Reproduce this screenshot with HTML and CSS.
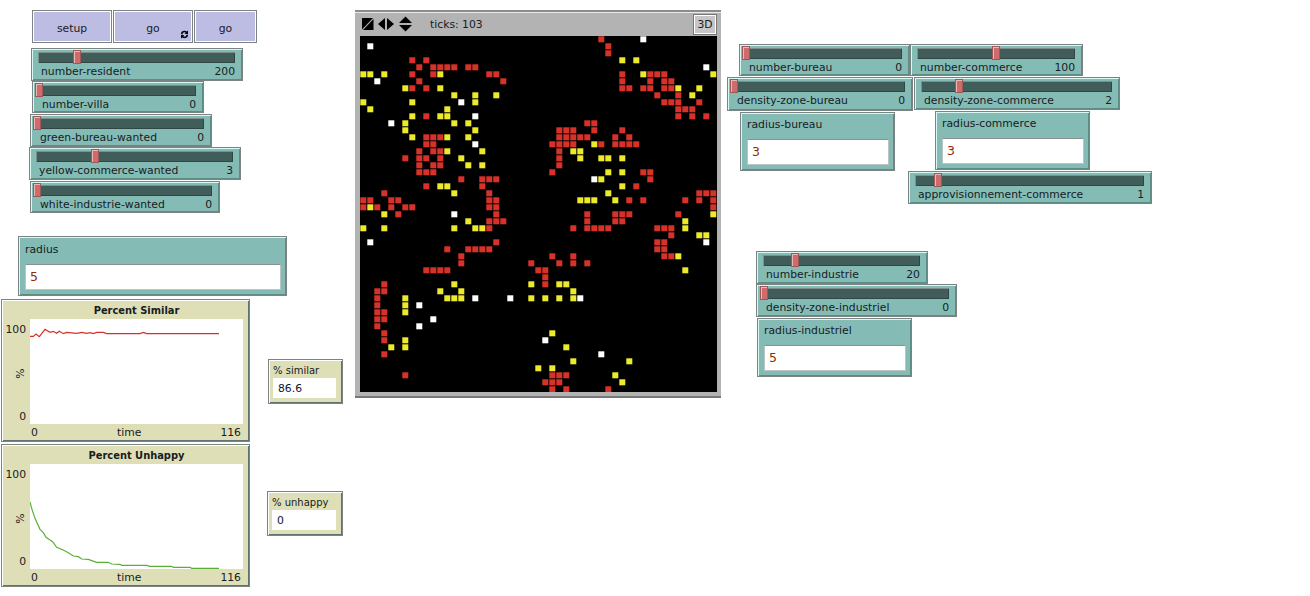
FILE: index.html
```html
<!DOCTYPE html>
<html>
    <head>
        <meta charset="utf-8" />
        <title>NetLogo Interface</title>
        <link rel="stylesheet" href="styles.css">
    </head>
    <body>
        <div class="interface">
            <!-- Buttons -->
            <div class="widget button b-setup">setup</div>
            <div class="widget button b-go-forever">go
                <svg class="forever" viewBox="0 0 9 9" width="9" height="9">
                    <path d="M1 4.2C1 1.4 3 .8 4.6 .8c1 0 1.7.3 2.2.8L8 .6v3.4H4.6l1.2-1.2c-.3-.3-.7-.5-1.2-.5-1 0-1.9.6-2 1.9z" />
                    <path d="M8 4.8C8 7.6 6 8.2 4.4 8.2c-1 0-1.7-.3-2.2-.8L1 8.4V5h3.4L3.2 6.2c.3.3.7.5 1.2.5 1 0 1.9-.6 2-1.9z" />
                </svg>
            </div>
            <div class="widget button b-go">go</div>

            <!-- Left sliders -->
            <div class="widget slider s-resident">
                <div class="track"><div class="handle" style="left: 35px"></div></div>
                <div class="slider-text"><span>number-resident</span><span>200</span></div>
            </div>
            <div class="widget slider s-villa">
                <div class="track"><div class="handle" style="left: -4px"></div></div>
                <div class="slider-text"><span>number-villa</span><span>0</span></div>
            </div>
            <div class="widget slider s-green">
                <div class="track"><div class="handle" style="left: -4px"></div></div>
                <div class="slider-text"><span>green-bureau-wanted</span><span>0</span></div>
            </div>
            <div class="widget slider s-yellow">
                <div class="track"><div class="handle" style="left: 55px"></div></div>
                <div class="slider-text"><span>yellow-commerce-wanted</span><span>3</span></div>
            </div>
            <div class="widget slider s-white">
                <div class="track"><div class="handle" style="left: -4px"></div></div>
                <div class="slider-text"><span>white-industrie-wanted</span><span>0</span></div>
            </div>

            <!-- Radius input -->
            <div class="widget input i-radius">
                <div class="input-label">radius</div>
                <div class="input-box">5</div>
            </div>

            <!-- Plots -->
            <div class="widget plot p-similar">
                <div class="plot-title">Percent Similar</div>
                <div class="plot-body">
                    <div class="plot-y">
                        <span>100</span>
                        <span class="plot-y-name">%</span>
                        <span>0</span>
                    </div>
                    <svg class="plot-area" viewBox="90 267 639 315" width="213" height="105">
                        <polyline class="line-red" points="90,319 100,319 108,312 118,320 135,298 150,307 160,304 170,310 178,304 190,311 200,307 230,310 245,307 260,310 270,308 280,311 290,307 310,307 320,311 420,311 430,307 440,311 657,311" />
                    </svg>
                </div>
                <div class="plot-x"><span>0</span><span>time</span><span>116</span></div>
            </div>
            <div class="widget plot p-unhappy">
                <div class="plot-title">Percent Unhappy</div>
                <div class="plot-body">
                    <div class="plot-y">
                        <span>100</span>
                        <span class="plot-y-name">%</span>
                        <span>0</span>
                    </div>
                    <svg class="plot-area" viewBox="90 72 639 315" width="213" height="105">
                        <polyline class="line-green" points="90,186 95,205 105,235 120,268 130,278 138,292 150,300 158,305 170,322 190,330 205,338 220,348 235,350 245,357 265,358 290,367 325,367 335,372 360,373 365,376 440,376 450,379 515,379 520,382 570,382 575,385 657,385" />
                    </svg>
                </div>
                <div class="plot-x"><span>0</span><span>time</span><span>116</span></div>
            </div>

            <!-- Monitors -->
            <div class="widget monitor m-similar">
                <div class="monitor-label">% similar</div>
                <div class="monitor-box">86.6</div>
            </div>
            <div class="widget monitor m-unhappy">
                <div class="monitor-label">% unhappy</div>
                <div class="monitor-box">0</div>
            </div>

            <!-- World view -->
            <div class="world">
                <div class="world-bar">
                    <svg class="world-icons" viewBox="0 0 52 16" width="52" height="16">
                        <path d="M1 2h11L1 13.5z" />
                        <path d="M12.5 3v11H2z" />
                        <path d="M24 2v12l-7-6z" />
                        <path d="M26 2v12l7-6z" />
                        <path d="M44.5 .5l6.5 6.5H38z" />
                        <path d="M44.5 15.5L38 9h13z" />
                    </svg>
                    <span class="ticks">ticks: 103</span>
                    <div class="three-d">3D</div>
                </div>
                <canvas id="canvas" width="357" height="356"></canvas>
            </div>

            <!-- Right side widgets -->
            <div class="widget slider s-bureau">
                <div class="track"><div class="handle" style="left: -4px"></div></div>
                <div class="slider-text"><span>number-bureau</span><span>0</span></div>
            </div>
            <div class="widget slider s-commerce">
                <div class="track"><div class="handle" style="left: 75px"></div></div>
                <div class="slider-text"><span>number-commerce</span><span>100</span></div>
            </div>
            <div class="widget slider s-density-bureau">
                <div class="track"><div class="handle" style="left: -4px"></div></div>
                <div class="slider-text"><span>density-zone-bureau</span><span>0</span></div>
            </div>
            <div class="widget slider s-density-commerce">
                <div class="track"><div class="handle" style="left: 34px"></div></div>
                <div class="slider-text"><span>density-zone-commerce</span><span>2</span></div>
            </div>
            <div class="widget input input-small i-bureau">
                <div class="input-label">radius-bureau</div>
                <div class="input-box">3</div>
            </div>
            <div class="widget input input-small i-commerce">
                <div class="input-label">radius-commerce</div>
                <div class="input-box">3</div>
            </div>
            <div class="widget slider s-appro">
                <div class="track"><div class="handle" style="left: 19px"></div></div>
                <div class="slider-text"><span>approvisionnement-commerce</span><span>1</span></div>
            </div>
            <div class="widget slider s-industrie">
                <div class="track"><div class="handle" style="left: 28px"></div></div>
                <div class="slider-text"><span>number-industrie</span><span>20</span></div>
            </div>
            <div class="widget slider s-density-industriel">
                <div class="track"><div class="handle" style="left: -3px"></div></div>
                <div class="slider-text"><span>density-zone-industriel</span><span>0</span></div>
            </div>
            <div class="widget input input-small i-industriel">
                <div class="input-label">radius-industriel</div>
                <div class="input-box">5</div>
            </div>
        </div>
        <script src="script.js"></script>
    </body>
</html>
```

FILE: styles.css
```css
body {
    margin: 0;
    background-color: white;
    font-family: "DejaVu Sans", sans-serif;
    font-size: 10.8px;
    color: #16201f;
}

.interface {
    position: relative;
    width: 1310px;
    height: 596px;
    overflow: hidden;
}

/* Every widget sits at its own place on the NetLogo canvas */
.widget {
    position: absolute;
    box-sizing: border-box;
    border: 1px solid #7b8483;
    box-shadow: inset 1px 1px 0 #ffffff, inset -1px -1px 0 #5f7371;
}

/* Buttons */
.button {
    display: flex;
    justify-content: center;
    align-items: center;
    padding-top: 4px;
    background-color: #bdbce3;
    box-shadow: inset 1px 1px 0 #ffffff, inset -1px -1px 0 #ffffff;
}

.b-setup { left: 32px; top: 10px; width: 80px; height: 33px; }
.b-go-forever { left: 113px; top: 10px; width: 80px; height: 33px; }
.b-go { left: 194px; top: 10px; width: 63px; height: 33px; }

.forever {
    position: absolute;
    right: 3px;
    bottom: 3px;
}

/* Sliders */
.slider {
    padding: 3px 7px 0 6px;
    background-color: #84bcb5;
    box-shadow: inset 1px 1px 0 #d9f7f3, inset -1px -1px 0 #5f8b85;
}

.track {
    position: relative;
    height: 11px;
    background-color: #405d59;
    box-shadow: inset 1px 1px 0 #7d8f8c, inset -1px -1px 0 #2f4643;
}

.handle {
    position: absolute;
    top: -2px;
    width: 8px;
    height: 14px;
    box-sizing: border-box;
    background-color: #cf6b6b;
    border: 1px solid #9b5a5a;
    box-shadow: inset 1px 1px 0 #efb5b5;
}

.slider-text {
    display: flex;
    justify-content: space-between;
    margin-top: 2px;
    padding-left: 3px;
    line-height: 13px;
}

.s-resident { left: 31px; top: 48px; width: 212px; height: 33px; }
.s-villa { left: 32px; top: 81px; width: 172px; height: 32px; }
.s-green { left: 30px; top: 114px; width: 182px; height: 33px; }
.s-yellow { left: 29px; top: 147px; width: 212px; height: 33px; }
.s-white { left: 30px; top: 181px; width: 190px; height: 32px; }
.s-bureau { left: 739px; top: 44px; width: 171px; height: 32px; }
.s-commerce { left: 910px; top: 44px; width: 173px; height: 32px; }
.s-density-bureau { left: 727px; top: 77px; width: 186px; height: 34px; }
.s-density-commerce { left: 914px; top: 77px; width: 206px; height: 33px; }
.s-appro { left: 908px; top: 171px; width: 244px; height: 33px; }
.s-industrie { left: 756px; top: 251px; width: 172px; height: 33px; }
.s-density-industriel { left: 756px; top: 284px; width: 201px; height: 33px; }

/* Input boxes */
.input {
    padding: 6px 5px 0 6px;
    background-color: #84bcb5;
    box-shadow: inset 1px 1px 0 #d9f7f3, inset -1px -1px 0 #5f8b85;
}

.input-small {
    padding-top: 5px;
}

.input-label {
    height: 21px;
    line-height: 13px;
}

.input-box {
    height: 26px;
    box-sizing: border-box;
    padding-left: 4px;
    background-color: white;
    border: 1px solid #bcc4c3;
    border-top-color: #8a9291;
    color: #8f2d00;
    font-size: 12.5px;
    line-height: 23px;
}

.i-radius { left: 18px; top: 236px; width: 269px; height: 60px; }
.i-bureau { left: 740px; top: 112px; width: 155px; height: 59px; }
.i-commerce { left: 935px; top: 111px; width: 155px; height: 59px; }
.i-industriel { left: 757px; top: 318px; width: 155px; height: 59px; }

/* Plots */
.plot {
    padding: 0 5px 0 2px;
    background-color: #dfdfb7;
}

.plot-title {
    height: 19px;
    padding-left: 25px;
    font-size: 9.9px;
    font-weight: bold;
    text-align: center;
    line-height: 22px;
}

.plot-body {
    display: flex;
}

.plot-y {
    display: flex;
    flex-direction: column;
    justify-content: space-between;
    align-items: flex-end;
    box-sizing: border-box;
    width: 22px;
    height: 105px;
    margin-right: 4px;
    padding: 4px 0 1px;
    line-height: 13px;
}

.plot-y-name {
    transform: rotate(-90deg);
    margin-right: 1px;
}

.plot-area {
    display: block;
    background-color: white;
}

.plot-area polyline {
    fill: none;
    stroke-width: 3.6;
}

.line-red { stroke: #d73229; }
.line-green { stroke: #59b034; }

.plot-x {
    display: flex;
    justify-content: space-between;
    margin-left: 27px;
    padding-right: 3px;
    line-height: 17px;
}

.p-similar { left: 1px; top: 299px; width: 249px; height: 143px; }
.p-unhappy { left: 1px; top: 444px; width: 249px; height: 143px; }

/* Monitors */
.monitor {
    padding: 4px 6px 0 4px;
    background-color: #dfdfb7;
}

.monitor-label {
    height: 14px;
    font-size: 10px;
    line-height: 13px;
}

.monitor-box {
    height: 20px;
    padding-left: 5px;
    background-color: white;
    color: #0c1430;
    line-height: 22px;
}

.m-similar { left: 268px; top: 359px; width: 75px; height: 45px; }
.m-unhappy { left: 267px; top: 491px; width: 76px; height: 45px; }

/* World view */
.world {
    position: absolute;
    left: 355px;
    top: 10px;
    width: 366px;
    height: 388px;
    box-sizing: border-box;
    padding: 0 4px 0 5px;
    background-color: #b3b3b3;
    border-top: 2px solid #8c8c8c;
    border-bottom: 2px solid #777777;
    box-shadow: inset 0 1px 0 #e9e9e9;
}

.world-bar {
    display: flex;
    align-items: center;
    height: 24px;
}

.world-icons {
    margin-left: 1px;
}

.ticks {
    margin-left: 17px;
}

.three-d {
    display: flex;
    justify-content: center;
    align-items: center;
    margin-left: auto;
    width: 24px;
    height: 21px;
    box-sizing: border-box;
    border: 1px solid #767676;
    box-shadow: inset 1px 1px 0 #ffffff, inset -1px -1px 0 #ffffff;
    background-color: #c6c6c6;
}

#canvas {
    display: block;
}
```

FILE: script.js
```js
// World cells, row by row: [row, red columns, yellow columns, white columns]
const cells = [
    [0, [34], [], [40]],
    [1, [35], [], [1]],
    [2, [35], [], []],
    [3, [7, 9], [37, 39], []],
    [4, [8, 10, 11, 12, 13, 15, 16], [], [49]],
    [5, [7, 10, 18, 19, 37, 41, 42, 43], [0, 1, 3, 11, 40, 50], []],
    [6, [8, 20, 37, 41, 43, 44], [], [2]],
    [7, [7, 9, 37, 38, 40, 41, 43, 44], [6, 11, 45, 48], []],
    [8, [42, 45], [13, 16, 19, 47], []],
    [9, [43, 44, 45, 48], [0, 7, 16], [14]],
    [10, [45, 46, 47], [1, 12], []],
    [11, [9, 45, 47, 49], [7, 11, 12], [16]],
    [12, [32, 33], [6, 13, 15], [4]],
    [13, [28, 29, 30, 33, 37], [6, 16], []],
    [14, [9, 10, 11, 28, 29, 30, 31, 32, 36, 38], [7, 12, 15], []],
    [15, [9, 10, 27, 28, 29, 30, 34, 36, 37, 38, 39], [33], [16]],
    [16, [8, 10, 11, 28], [12, 17, 30, 31], []],
    [17, [6, 8, 9, 11, 28], [14, 31, 34, 35, 37], []],
    [18, [8, 10, 11, 28], [15, 17], []],
    [19, [8, 9, 10, 27, 40, 41], [35, 37], []],
    [20, [14, 17, 18, 19, 41], [34], [33]],
    [21, [9, 17, 39], [11, 12, 37], []],
    [22, [3, 18, 48, 49, 50], [13, 35], []],
    [23, [0, 1, 4, 5, 18, 19, 38, 40, 46, 48, 50], [31, 32, 33, 36], []],
    [24, [0, 2, 4, 6, 7, 18, 19, 50], [1], []],
    [25, [5, 19, 32, 36, 37, 38, 45], [3, 50], [13]],
    [26, [18, 19, 20, 32, 36, 37], [15, 46], []],
    [27, [18, 30, 32, 33, 34, 35, 42, 43, 44], [0, 3, 13, 16, 17, 46], []],
    [28, [44], [48, 49], []],
    [29, [19, 42, 43], [], [1, 49]],
    [30, [12, 15, 16, 17, 18, 42, 43], [], []],
    [31, [14, 27, 30, 43, 44], [45], []],
    [32, [14, 24, 28, 30, 32], [], []],
    [33, [9, 10, 11, 12, 25, 26], [46], []],
    [34, [26], [], []],
    [35, [3, 26], [13, 24, 28, 29], []],
    [36, [2, 3], [11, 14, 30], []],
    [37, [2], [6, 12, 13, 14, 24, 26, 28, 30], [16, 21, 31]],
    [38, [2], [6], [8]],
    [39, [2, 3], [6], []],
    [40, [2, 3], [], [10]],
    [41, [2], [], [8]],
    [42, [3], [27], []],
    [43, [3], [6], [26]],
    [44, [], [4, 6, 29], []],
    [45, [3], [], [34]],
    [46, [], [30, 38], []],
    [47, [], [25, 27], []],
    [48, [6, 27, 28, 29], [36], []],
    [49, [26, 27, 28], [37], []],
    [50, [27, 29, 35], [], []],
];

const colors = ["#d73229", "#ecea2a", "#ffffff"];

// Draw one patch, soft at the edges like the scaled NetLogo shape
function drawCell(ctx, col, row, color) {
    ctx.fillStyle = color;
    ctx.fillRect(col * 7 + 0.3, row * 7 + 0.3, 6, 6);
}

const canvas = document.getElementById("canvas");
const ctx = canvas.getContext("2d");

ctx.fillStyle = "black";
ctx.fillRect(0, 0, canvas.width, canvas.height);

cells.forEach(function (line) {
    colors.forEach(function (color, i) {
        line[i + 1].forEach(function (col) {
            drawCell(ctx, col, line[0], color);
        });
    });
});
```
